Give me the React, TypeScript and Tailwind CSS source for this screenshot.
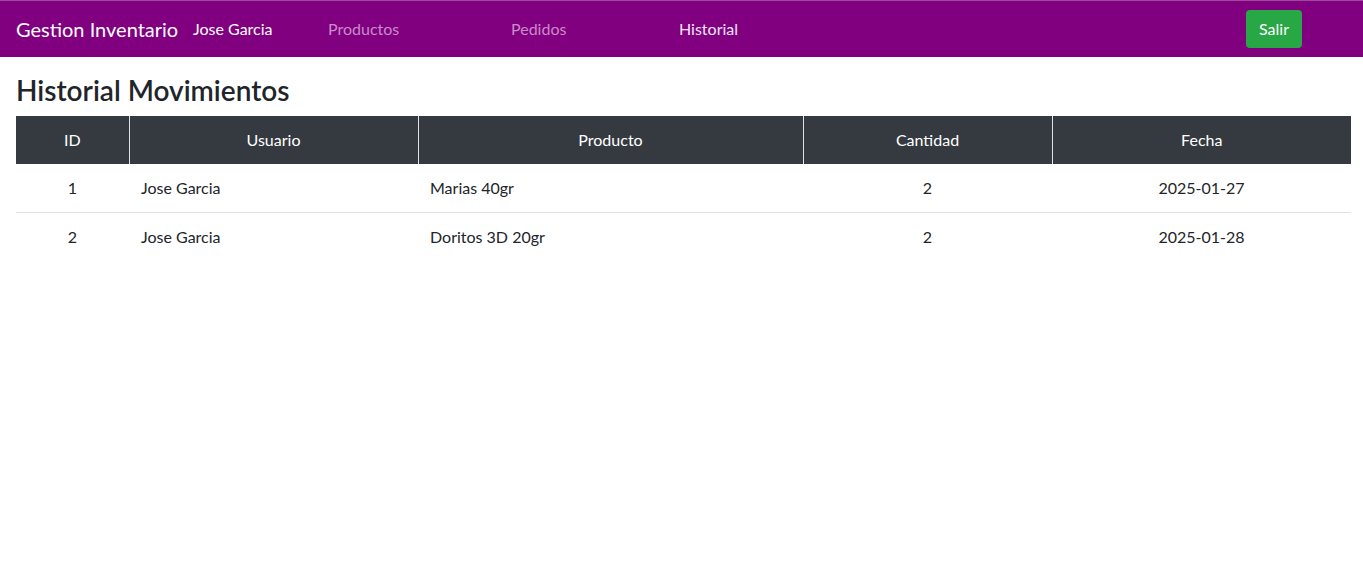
const movimientos = [
  { id: 1, usuario: "Jose Garcia", producto: "Marias 40gr", cantidad: 2, fecha: "2025-01-27" },
  { id: 2, usuario: "Jose Garcia", producto: "Doritos 3D 20gr", cantidad: 2, fecha: "2025-01-28" },
];

export default function App() {
  return (
    <div className="min-h-screen bg-white font-['Lato',sans-serif] text-[#212529]">
      {/* NAVBAR */}
      <nav className="flex h-[57px] items-center border-t border-[#9a4c9a] bg-[#800080] pl-4 pr-[61px]">
        <span className="w-[177px] text-[20px] text-white">Gestion Inventario</span>
        <span className="w-[135px] text-[16px] text-white">Jose Garcia</span>
        <a className="w-[183px] text-[16px] text-[#c88cc8]">Productos</a>
        <a className="w-[168px] text-[16px] text-[#c88cc8]">Pedidos</a>
        <a className="text-[16px] text-[#f3e6f3]">Historial</a>
        <button className="ml-auto h-[38px] w-14 rounded bg-[#28a745] text-[16px] text-white">
          Salir
        </button>
      </nav>

      <div className="pl-4 pr-3">
        <h3 className="mt-[17px] mb-2 text-[28px] leading-[1.2] font-semibold">Historial Movimientos</h3>

        <table className="w-full table-fixed border-collapse text-[16px]">
          <thead>
            <tr className="h-12 bg-[#343a40] text-white">
              <th className="w-[113px] border-r border-[#dee2e6] font-normal">ID</th>
              <th className="w-[289px] border-r border-[#dee2e6] font-normal">Usuario</th>
              <th className="w-[385px] border-r border-[#dee2e6] font-normal">Producto</th>
              <th className="w-[249px] border-r border-[#dee2e6] font-normal">Cantidad</th>
              <th className="font-normal">Fecha</th>
            </tr>
          </thead>
          <tbody>
            {movimientos.map((m, i) => (
              <tr
                key={m.id}
                className={i < movimientos.length - 1 ? "h-[49px] border-b border-[#dee2e6]" : "h-12"}
              >
                <td className="text-center">{m.id}</td>
                <td className="px-3">{m.usuario}</td>
                <td className="px-3">{m.producto}</td>
                <td className="text-center">{m.cantidad}</td>
                <td className="text-center">{m.fecha}</td>
              </tr>
            ))}
          </tbody>
        </table>
      </div>
    </div>
  );
}
